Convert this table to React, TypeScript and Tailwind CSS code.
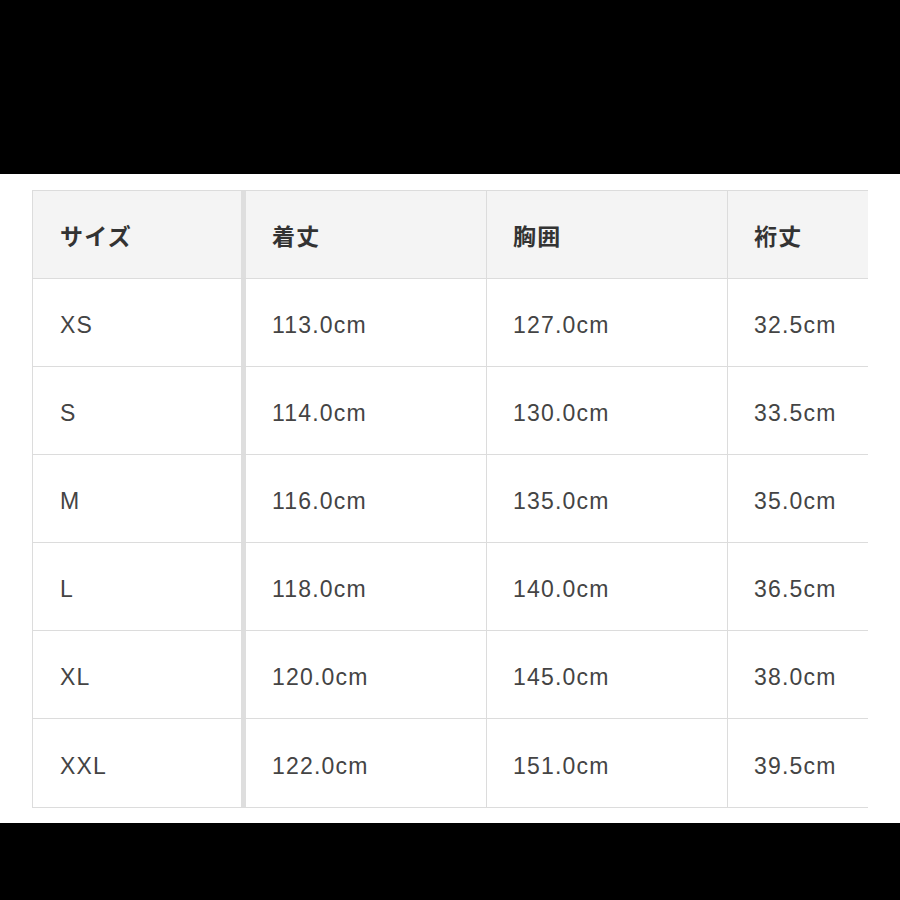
const HEAD = ["サイズ", "着丈", "胸囲", "裄丈"];

const ROWS: string[][] = [
  ["XS", "113.0cm", "127.0cm", "32.5cm"],
  ["S", "114.0cm", "130.0cm", "33.5cm"],
  ["M", "116.0cm", "135.0cm", "35.0cm"],
  ["L", "118.0cm", "140.0cm", "36.5cm"],
  ["XL", "120.0cm", "145.0cm", "38.0cm"],
  ["XXL", "122.0cm", "151.0cm", "39.5cm"],
];

function Row({ cells, head, last }: { cells: string[]; head?: boolean; last?: boolean }) {
  const text = head ? "font-bold text-[#333333]" : "text-[#444444]";
  return (
    <div
      className={`flex h-[88px] ${last ? "" : "border-b border-[#dcdcdc]"} ${
        head ? "bg-[#f4f4f4]" : "bg-white"
      }`}
    >
      <div className={`flex w-[213px] shrink-0 items-center border-r-[5px] border-[#dedede] pl-[27px] pt-[6px] ${text}`}>
        {cells[0]}
      </div>
      <div className={`flex w-[241px] shrink-0 items-center border-r border-[#dcdcdc] pl-[26px] pt-[6px] ${text}`}>
        {cells[1]}
      </div>
      <div className={`flex w-[241px] shrink-0 items-center border-r border-[#dcdcdc] pl-[26px] pt-[6px] ${text}`}>
        {cells[2]}
      </div>
      <div className={`flex flex-1 items-center pl-[26px] pt-[6px] ${text}`}>{cells[3]}</div>
    </div>
  );
}

export default function App() {
  return (
    <div
      className="flex h-[900px] w-[900px] flex-col bg-black text-[23px] tracking-[1.2px]"
      style={{ fontFamily: '"Liberation Sans", "Noto Sans CJK JP", sans-serif' }}
    >
      <div className="h-[174px] shrink-0 bg-black" />
      <div className="shrink-0 bg-white pb-[15px] pl-[32px] pt-[16px]">
        <div className="w-[836px] border-y border-l border-[#dcdcdc]">
          <Row cells={HEAD} head />
          {ROWS.map((r, i) => (
            <Row key={r[0]} cells={r} last={i === ROWS.length - 1} />
          ))}
        </div>
      </div>
      <div className="flex-1 bg-black" />
    </div>
  );
}
